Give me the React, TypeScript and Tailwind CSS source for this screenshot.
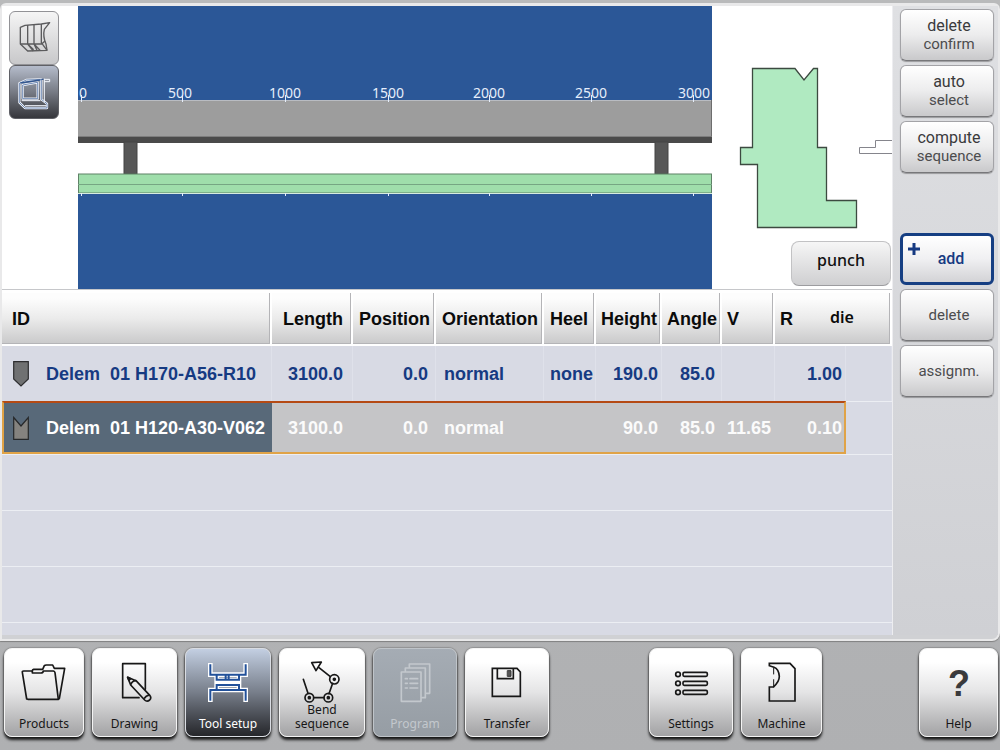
import type { ReactNode } from "react";

const scaleMarks = [
  { label: "0", tick: 3, text: 5 },
  { label: "500", tick: 104, text: 102 },
  { label: "1000", tick: 207, text: 207 },
  { label: "1500", tick: 310, text: 310 },
  { label: "2000", tick: 411, text: 411 },
  { label: "2500", tick: 513, text: 513 },
  { label: "3000", tick: 615, text: 616 },
];

function FrontView() {
  return (
    <svg
      viewBox="0 0 634 283"
      preserveAspectRatio="xMidYMid slice"
      className="h-[283px] min-w-0 flex-1"
      role="img"
      aria-label="Front view of the machine with tools"
    >
      <rect width="634" height="283" fill="#fff" />
      <rect width="634" height="95" fill="#2b5797" />
      {scaleMarks.map((m) => (
        <text
          key={m.label}
          x={m.text}
          y="92"
          textAnchor="middle"
          fill="#e6eefb"
          fontSize="14"
          fontFamily='"Noto Sans", sans-serif'
        >
          {m.label}
        </text>
      ))}
      <rect y="94" width="634" height="37" fill="#9d9d9d" />
      <path d="M0 94.5H634" stroke="#b9bcc2" />
      <path d="M633.5 94V131" stroke="#6d6d6d" />
      <rect y="130" width="634" height="7" fill="#4a4a4a" />
      <path d="M0 130.500H634" stroke="#7d7d7d" />
      <rect x="46" y="136" width="13" height="32" fill="#575757" stroke="#444" />
      <rect x="577" y="136" width="13" height="32" fill="#575757" stroke="#444" />
      <rect x="0.5" y="168" width="633" height="19" fill="#9fdeab" stroke="#5f8267" />
      <path d="M0 178.500H634" stroke="#76a683" />
      <rect y="187" width="634" height="96" fill="#2b5797" />
      <path d="M0 187.500H634" stroke="#d7ecdf" />
      {scaleMarks.map((m) => (
        <path key={m.label} d={`M${m.tick + 0.5} 89V96M${m.tick + 0.5} 187V190`} stroke="#e6eefb" />
      ))}
    </svg>
  );
}

function SideView() {
  return (
    <svg
      viewBox="712 6 180 225"
      className="block h-[225px] w-[180px]"
      role="img"
      aria-label="Side view of the die"
    >
      <path
        d="M752.500 68.500H795L804 80L813.500 68.500H817.500V147.500H826.500V200.500H856.500V227.500H757.500V164.500H740.500V147.500H752.500Z"
        fill="#b0eac1"
        stroke="#3c4a40"
        strokeWidth="1.300"
      />
      <path d="M893 153.500H859.500V147.500H875.500V140.500H893" fill="#fff" stroke="#85858c" />
    </svg>
  );
}

const sideButton =
  "flex h-[52px] w-full flex-col items-center justify-center rounded-md border border-[#a3a3a7] border-b-[#77777a] bg-linear-to-b from-white via-[#ececed] to-[#c9c9cb] pl-1 font-[Roboto,sans-serif] leading-[19px] text-[#4c4c4e] shadow-[0_1px_1px_rgba(0,0,0,0.3)]";

function SideButton({ first, second }: { first?: string; second: string }) {
  return (
    <button type="button" className={sideButton}>
      {first && <span className="text-base leading-[19px] text-[#3a3a3c]">{first}</span>}
      <span className="text-[15px] leading-[19px]">{second}</span>
    </button>
  );
}

const th =
  "h-[53px] border-r-2 border-b-2 border-white bg-linear-to-b from-[#fdfdfd] from-10% via-[#ebebeb] to-[#c9c9ca] p-0 text-left text-lg font-bold text-[#0b0b0b] shadow-[inset_-1px_-1px_0_#b4b4b7]";

const idle = "h-[55px] border-r border-[#dfe1ea] p-0 text-lg font-bold text-[#163a82]";
const sel =
  "h-[53px] border-t-2 border-t-[#b54a14] border-b-2 border-b-[#e0a347] bg-[#c5c5c7] p-0 text-lg font-bold text-[#fbfbfb]";

function ToolTable() {
  return (
    <table className="w-full table-fixed border-separate border-spacing-0 bg-[#d8dae4] font-['Liberation_Sans',Arial,sans-serif]">
      <colgroup>
        <col />
        <col className="w-[81px]" />
        <col className="w-[83px]" />
        <col className="w-[108px]" />
        <col className="w-[52px]" />
        <col className="w-[66px]" />
        <col className="w-[60px]" />
        <col className="w-[53px]" />
        <col className="w-[71px]" />
        <col className="w-[46px]" />
      </colgroup>
      <thead>
        <tr>
          <th className={th}><span className="pl-2.5">ID</span></th>
          <th className={th}><span className="pl-[11px]">Length</span></th>
          <th className={th}><span className="pl-1.5">Position</span></th>
          <th className={th}><span className="pl-1.5">Orientation</span></th>
          <th className={th}><span className="pl-1.5">Heel</span></th>
          <th className={th}><span className="pl-[5px]">Height</span></th>
          <th className={th}><span className="pl-[5px]">Angle</span></th>
          <th className={th}><span className="pl-[5px]">V</span></th>
          <th className={th} colSpan={2}>
            <span className="flex items-center gap-[37px] pl-[5px]">
              R
              <button type="button" className="pb-1 font-['Noto_Sans',sans-serif] text-base leading-5 font-semibold">
                die
              </button>
            </span>
          </th>
        </tr>
      </thead>
      <tbody>
        <tr>
          <td className={idle}>
            <span className="flex items-center pl-[11px] whitespace-pre">
              <svg viewBox="0 0 16 26" className="mr-[17px] h-[26px] w-4" aria-hidden="true">
                <path d="M0.700 0.700H15.300V18L8 25L0.700 18Z" fill="#707172" stroke="#2d2d2f" strokeWidth="1.200" />
              </svg>
              {"Delem  01 H170-A56-R10"}
            </span>
          </td>
          <td className={idle + " pr-[9px] text-right"}>3100.0</td>
          <td className={idle + " pr-[7px] text-right"}>0.0</td>
          <td className={idle + " pl-2"}>normal</td>
          <td className={idle + " pl-1.5"}>none</td>
          <td className={idle + " pr-[3px] text-right"}>190.0</td>
          <td className={idle + " pr-1.5 text-right"}>85.0</td>
          <td className={idle} />
          <td className={idle + " pr-[3px] text-right"}>1.00</td>
          <td className={idle} />
        </tr>
        <tr aria-selected="true">
          <td className="h-[53px] border-t-2 border-b-2 border-l-2 border-t-[#b54a14] border-b-[#e0a347] border-l-[#e0a347] bg-[#586979] p-0 text-lg font-bold text-white">
            <span className="flex items-center pl-[9px] whitespace-pre">
              <svg viewBox="0 0 16 24" className="mr-[17px] h-6 w-4" aria-hidden="true">
                <path d="M0.700 1.500L8 10L15.300 1.500V23.300H0.700Z" fill="#85837f" stroke="#26282a" strokeWidth="1.200" />
              </svg>
              {"Delem  01 H120-A30-V062"}
            </span>
          </td>
          <td className={sel + " pr-2.5 text-right"}>3100.0</td>
          <td className={sel + " pr-2 text-right"}>0.0</td>
          <td className={sel + " pl-2"}>normal</td>
          <td className={sel} />
          <td className={sel + " pr-1 text-right"}>90.0</td>
          <td className={sel + " pr-[7px] text-right"}>85.0</td>
          <td className={sel + " pr-1 text-right"}>11.65</td>
          <td className={sel + " border-r-2 border-r-[#e0a347] pr-0.5 text-right"}>0.10</td>
          <td className="border-t border-[#eceef3] p-0" />
        </tr>
        {[0, 1, 2].map((n) => (
          <tr key={n}>
            <td colSpan={10} className="h-14 border-t border-[#eceef3] p-0" />
          </tr>
        ))}
        <tr>
          <td colSpan={10} className="h-[13px] border-t border-[#eceef3] p-0" />
        </tr>
      </tbody>
    </table>
  );
}

function NavButton({
  label,
  view,
  width,
  state,
  children,
}: {
  label: ReactNode;
  view: string;
  width: string;
  state?: "active" | "disabled";
  children: ReactNode;
}) {
  const look =
    state === "active"
      ? "border-[#d9dce2] bg-linear-to-b from-[#c3cfe2] via-[#777e8a] to-[#26272b] text-white"
      : state === "disabled"
        ? "border-[#bfc4c9] bg-linear-to-b from-[#a5acb4] to-[#969da4] text-[#c3c8cd]"
        : "border-[#f4f4f4] bg-linear-to-b from-white from-15% via-[#e4e4e5] to-[#a2a2a4] text-[#171717]";
  return (
    <button
      type="button"
      disabled={state === "disabled"}
      className={
        "flex h-[89px] flex-col items-center rounded-lg border pt-[7px] shadow-[0_3px_3px_rgba(0,0,0,0.85),0_0_1px_1px_rgba(90,90,90,0.35)] " +
        width +
        " " +
        look
      }
    >
      <svg
        viewBox={view}
        className="h-[47px] w-[60px] shrink-0"
        fill="none"
        stroke="currentColor"
        strokeWidth="5"
        strokeLinejoin="round"
        strokeLinecap="round"
        aria-hidden="true"
      >
        {children}
      </svg>
      <span className="flex h-7 items-end justify-center text-center text-xs leading-[14px]">{label}</span>
    </button>
  );
}

export default function App() {
  return (
    <div className="flex min-h-screen flex-col bg-linear-to-b from-[#b9babb] to-[#afb0b2] pt-[3px] font-['Noto_Sans',sans-serif]">
      <main className="flex rounded-t-md rounded-br-lg border-t-[3px] border-r-2 border-b-2 border-l-2 border-[#e9e9ea] bg-[#d0d1d4] pb-1 shadow-[0_1px_1px_#808080]">
        <div className="flex min-w-0 flex-1 flex-col">
          <section className="flex border-b border-[#c6c7ca] bg-white">
            <div className="w-[76px] shrink-0 pt-[5px] pl-[7px]">
              <button
                type="button"
                aria-label="Solid view"
                className="block h-[54px] w-[50px] rounded-md border border-[#929296] bg-linear-to-b from-[#f5f5f5] to-[#c8c8ca]"
              >
                <svg viewBox="31 36 144 156" className="h-[52px] w-12" fill="none" stroke="#5b5b5d" strokeWidth="4" strokeLinejoin="round" aria-hidden="true">
                  <path d="M62 82L76 76L125 72L150 68L134 88Q129 109 139 132L142 151L84 153L62 132Z" />
                  <path d="M84 75V132L102 149M103 74V132L121 151M125 72V128L142 151M62 132H126L136 123M84 132L101 153M103 132L112 151" />
                </svg>
              </button>
              <button
                type="button"
                aria-label="Outline view"
                className="block h-[54px] w-[50px] rounded-md border border-[#5f6066] bg-linear-to-b from-[#b5bccb] via-[#777b85] to-[#36373c]"
              >
                <svg viewBox="31 200 144 156" className="h-[52px] w-12" fill="none" strokeLinejoin="round" aria-hidden="true">
                  <path d="M59 252L80 242L125 240V300L142 313V326H76L59 309ZM69 257L114 249V298H69Z" stroke="#f5f8ff" strokeWidth="7" />
                  <path d="M59 252L80 242L125 240V300L142 313V326H76L59 309ZM69 257L114 249V298H69Z" stroke="#315690" strokeWidth="2" />
                  <path d="M62 251L122 242M125 240H132" stroke="#315690" strokeWidth="4" />
                  <path d="M134 238V308M66 304H122M76 319H140M134 240H150V247H134" stroke="#f5f8ff" strokeWidth="3" />
                </svg>
              </button>
            </div>
            <FrontView />
            <div className="w-[180px] shrink-0">
              <SideView />
              <button
                type="button"
                className="mt-2.5 ml-[79px] block h-[45px] w-[100px] rounded-lg border border-[#c2c2c4] border-b-[#9c9c9f] bg-linear-to-b from-[#f6f6f6] to-[#cfcfd1] pb-2 text-base font-medium text-[#111]"
              >
                punch
              </button>
            </div>
          </section>
          <div className="border-t-[3px] border-white">
            <ToolTable />
          </div>
        </div>
        <aside className="flex w-[106px] shrink-0 flex-col gap-1 border-l border-[#ededf0] bg-linear-to-b from-[#dfe0e3] to-[#cfd0d4] pt-[3px] pr-1 pl-[7px]">
          <SideButton first="delete" second="confirm" />
          <SideButton first="auto" second="select" />
          <SideButton first="compute" second="sequence" />
          <button
            type="button"
            className="relative mt-14 flex h-[52px] w-full items-center justify-center rounded-md border-[3px] border-[#163f83] bg-linear-to-b from-white via-[#f0f0f2] to-[#d3d3d6] pl-2 font-[Roboto,sans-serif] text-base font-medium text-[#163a82]"
          >
            <svg viewBox="0 0 12 12" className="absolute top-[7px] left-[5px] size-3" stroke="#163a82" strokeWidth="3" aria-hidden="true">
              <path d="M6 0V12M0 6H12" />
            </svg>
            add
          </button>
          <SideButton second="delete" />
          <SideButton second="assignm." />
        </aside>
      </main>

      <nav className="flex gap-2 pt-[7px] pr-0.5 pl-1" aria-label="Modes">
        <NavButton label="Products" view="42 78 180 141" width="w-20">
          <path d="M80 207L67 127Q66 123 71 123H97V129H123Q129 129 130 123H160Q164 124 165 128L175 208H84Q80 208 80 204Z" />
          <path d="M97 123Q97 119 101 118H128L133 107Q135 105 139 105H158L163 115H194L178 206" />
        </NavButton>
        <NavButton label="Drawing" view="312 78 180 141" width="w-[85px]">
          <path d="M433 178V101H365V203H414" />
          <path d="M380 142L405 152L447 197Q452 204 446 210Q438 217 431 210L389 165ZM405 152Q392 153 389 165M431 204Q435 197 442 196" />
          <path d="M380 142L389 146L384 151Z" fill="currentColor" />
        </NavButton>
        <NavButton label="Tool setup" view="594 78 180 141" width="w-[86px]" state="active">
          <g stroke="#fff" strokeWidth="14" strokeLinecap="butt" strokeLinejoin="miter">
            <path d="M631 99V134H737V99M650 136V150H717V136M650 150V164M717 150V164M650 178V164H717V178M631 216V180H737V216" />
          </g>
          <g stroke="#22519a" strokeWidth="6" strokeLinecap="butt" strokeLinejoin="miter">
            <path d="M631 103V134H737V103M650 136V149H717V136M677 136V149M686 136V149M650 178V165H717V178M631 212V180H737V212" />
          </g>
        </NavButton>
        <NavButton label={<>Bend<br />sequence</>} view="65 78 180 141" width="w-[86px]">
          <path d="M124 98L153 96L137 122ZM145 112L180 140M187 160L176 191M131 203H160M99 148L113 190" />
          <circle cx="192" cy="148" r="14" />
          <circle cx="117" cy="203" r="13" />
          <circle cx="174" cy="203" r="13" />
          <g fill="currentColor">
            <circle cx="192" cy="148" r="3" />
            <circle cx="117" cy="203" r="3" />
            <circle cx="174" cy="203" r="3" />
          </g>
        </NavButton>
        <NavButton label="Program" view="346 78 180 141" width="w-[84px]" state="disabled">
          <path d="M395 126H454V214H395ZM407 122V114H467V203H458M419 110V102H480V190H471" />
          <path d="M407 146H413M421 146H444M407 160H413M421 160H444M407 174H413M421 174H444" />
        </NavButton>
        <NavButton label="Transfer" view="622 78 180 141" width="w-[84px]">
          <path d="M668 115H742L752 126V199H668ZM683 115V146H731V115" strokeLinejoin="miter" />
          <rect x="714" y="122" width="10" height="17" fill="#555" stroke="#333" strokeWidth="3" />
        </NavButton>
        <div className="flex gap-2 pl-[92px]">
          <NavButton label="Settings" view="64 78 180 141" width="w-[84px]">
            {[133, 160, 187].map((y) => (
              <g key={y}>
                <circle cx="115" cy={y} r="7" />
                <rect x="130" y={y - 6} width="73" height="12" rx="4" />
              </g>
            ))}
          </NavButton>
          <NavButton label="Machine" view="336 78 180 141" width="w-[81px]">
            <path d="M388 100H450L465 116V213H388V171H400Q418 156 418 139Q416 117 402 112L388 107Z" strokeLinejoin="miter" />
            <path d="M401 115V132M401 149V171" strokeWidth="3" />
          </NavButton>
        </div>
        <div className="ml-auto">
          <NavButton label="Help" view="866 78 180 141" width="w-[79px]">
            <text
              x="956"
              y="199"
              textAnchor="middle"
              fill="#3a3a3c"
              stroke="none"
              fontSize="108"
              fontWeight="700"
              fontFamily='"Liberation Sans", Arial, sans-serif'
            >
              ?
            </text>
          </NavButton>
        </div>
      </nav>
    </div>
  );
}
